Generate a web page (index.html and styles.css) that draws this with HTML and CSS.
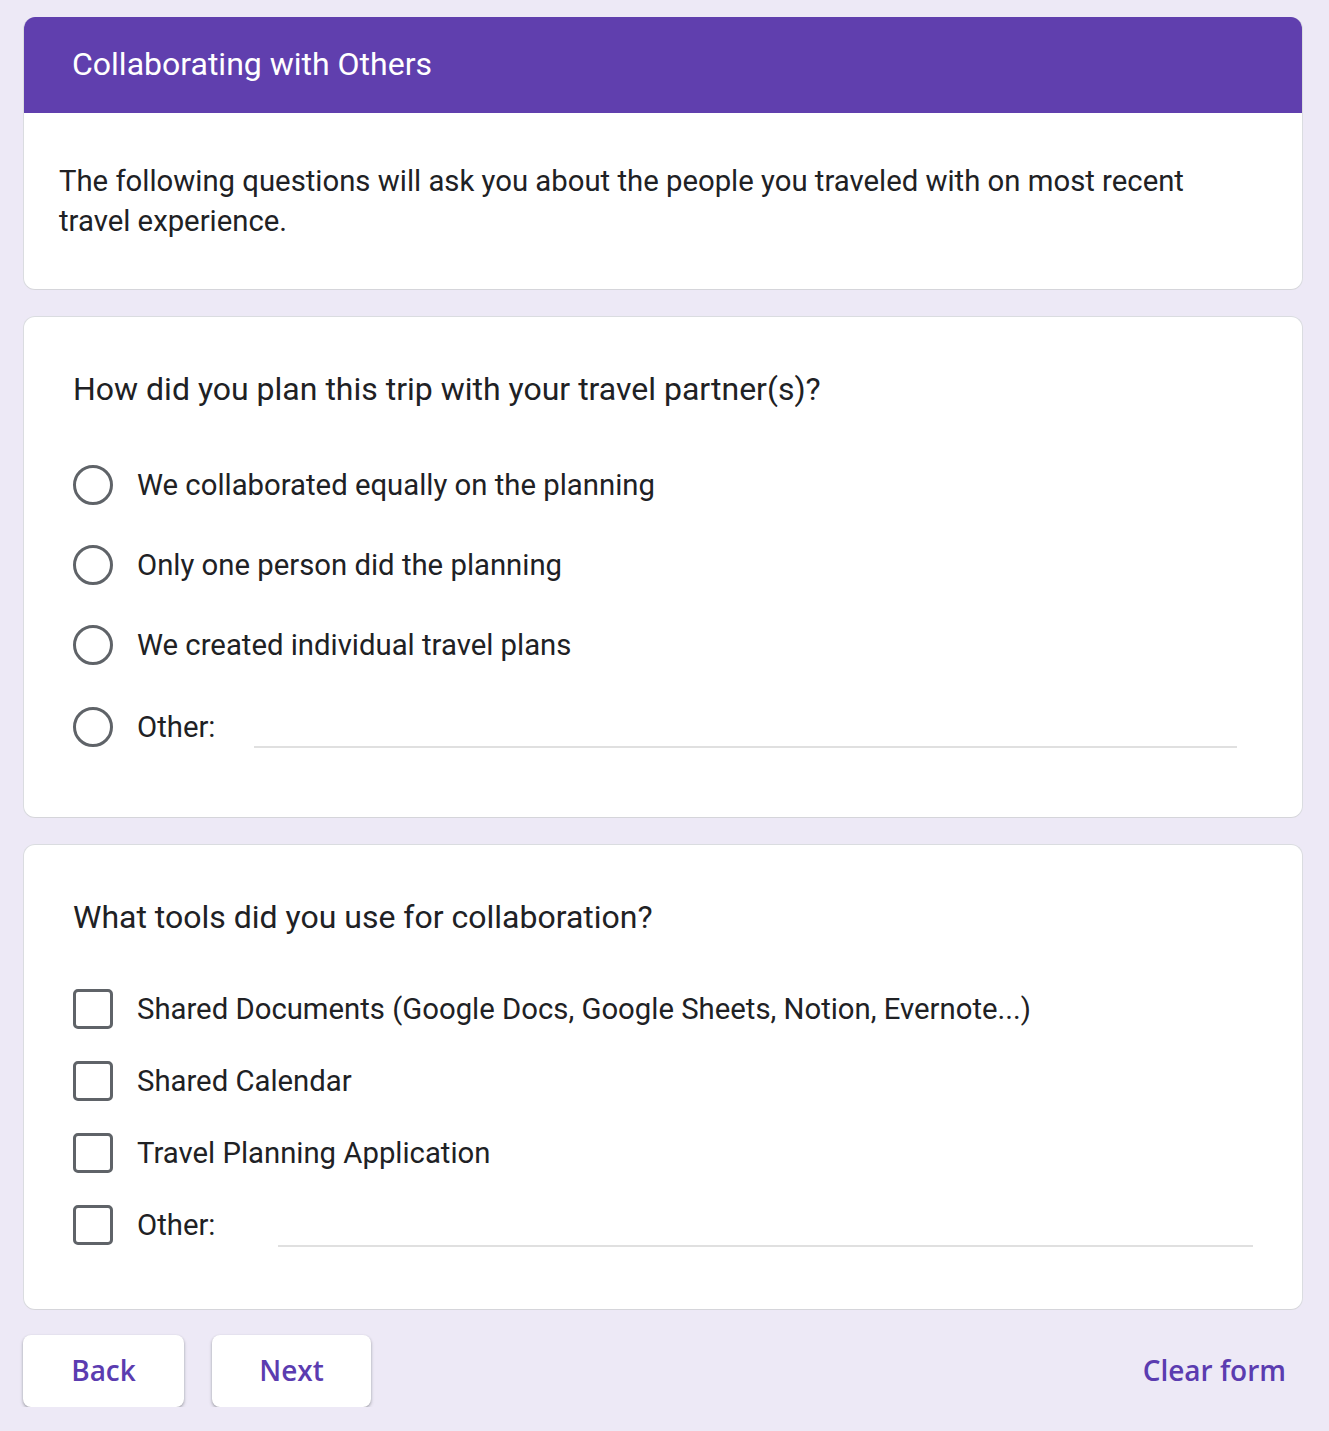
FILE: index.html
```html
<!DOCTYPE html>
<html>
<head>
<meta charset="utf-8">
<link rel="stylesheet" href="styles.css">
</head>
<body>
<div class="page">
  <section class="card intro">
    <div class="banner">Collaborating with Others</div>
    <p class="desc">The following questions will ask you about the people you traveled with on most recent travel experience.</p>
  </section>

  <section class="card question radios">
    <h2 class="qtitle">How did you plan this trip with your travel partner(s)?</h2>
    <ul class="options">
      <li class="opt"><span class="radio"></span><span class="label">We collaborated equally on the planning</span></li>
      <li class="opt"><span class="radio"></span><span class="label">Only one person did the planning</span></li>
      <li class="opt"><span class="radio"></span><span class="label">We created individual travel plans</span></li>
      <li class="opt other"><span class="radio"></span><span class="label">Other:</span><span class="line line-r"></span></li>
    </ul>
  </section>

  <section class="card question checks">
    <h2 class="qtitle">What tools did you use for collaboration?</h2>
    <ul class="options">
      <li class="opt"><span class="box"></span><span class="label">Shared Documents (Google Docs, Google Sheets, Notion, Evernote...)</span></li>
      <li class="opt"><span class="box"></span><span class="label">Shared Calendar</span></li>
      <li class="opt"><span class="box"></span><span class="label">Travel Planning Application</span></li>
      <li class="opt other"><span class="box"></span><span class="label">Other:</span><span class="line line-c"></span></li>
    </ul>
  </section>

  <div class="actions">
    <button class="btn btn-back">Back</button>
    <button class="btn btn-next">Next</button>
    <span class="clear">Clear form</span>
  </div>
</div>
</body>
</html>
```

FILE: styles.css
```css
* { box-sizing: border-box; }
html, body {
  margin: 0;
  padding: 0;
  background: #ede9f6;
}
body {
  font-family: Roboto, "Liberation Sans", sans-serif;
  color: #202124;
}
.page {
  width: 1329px;
  padding: 17px 26px 0 23px;
  display: flex;
  flex-direction: column;
  gap: 26px;
}
.card {
  background: #fff;
  border: 1px solid #dadce0;
  border-bottom-color: #d5d5da;
  border-radius: 12px;
  overflow: hidden;
}
.intro {
  height: 273px;
  border-top: none;
}
.banner {
  height: 96px;
  background: #603fae;
  color: #fff;
  font-size: 32px;
  padding-left: 48px;
  padding-bottom: 2px;
  display: flex;
  align-items: center;
}
.desc {
  margin: 0;
  padding: 48px 50px 0 35px;
  font-size: 29.3px;
  line-height: 40px;
}
.question {
  padding: 50px 50px 0 49px;
}
.radios { height: 502px; }
.checks { height: 466px; }
.qtitle {
  margin: 0;
  font-weight: 400;
  font-size: 32px;
  line-height: 44px;
}
.options {
  list-style: none;
  margin: 0;
  padding: 0;
}
.radios .options { margin-top: 54px; }
.radios .opt { height: 80px; }
.checks .options { margin-top: 50px; }
.checks .opt { height: 72px; }
.opt {
  display: flex;
  align-items: flex-start;
}
.radio {
  width: 40px;
  height: 40px;
  border: 3.5px solid #5f6368;
  border-radius: 50%;
  flex: none;
}
.box {
  width: 40px;
  height: 40px;
  border: 3.5px solid #5f6368;
  border-radius: 5px;
  flex: none;
}
.label {
  font-size: 29.3px;
  line-height: 40px;
  margin-left: 24px;
}
.other .label {
  flex: none;
  width: 93px;
  white-space: nowrap;
}
.radios .other .radio { margin-top: 2px; }
.radios .other .label { margin-top: 2px; }
.line {
  height: 2px;
  background: #e0e0e0;
  flex: none;
}
.line-r {
  width: 983px;
  margin-left: 24px;
  margin-top: 41px;
}
.line-c {
  width: 975px;
  margin-left: 48px;
  margin-top: 40px;
}
.actions {
  display: flex;
  align-items: center;
  gap: 28px;
  margin-top: -1px;
}
.btn {
  height: 72px;
  width: 161px;
  background: #fff;
  border: none;
  border-radius: 8px;
  box-shadow: 0 1px 2px rgba(60,64,67,0.3), 0 2px 3px 1px rgba(60,64,67,0.15);
  font-family: "Open Sans", Roboto, sans-serif;
  font-weight: 600;
  font-size: 28px;
  color: #5b3cb0;
  padding: 0 0 2px;
}
.btn-next { width: 159px; }
.clear {
  margin-left: auto;
  margin-right: 17px;
  padding-bottom: 2px;
  font-family: "Open Sans", Roboto, sans-serif;
  font-weight: 600;
  font-size: 28px;
  color: #5b3cb0;
}
```
